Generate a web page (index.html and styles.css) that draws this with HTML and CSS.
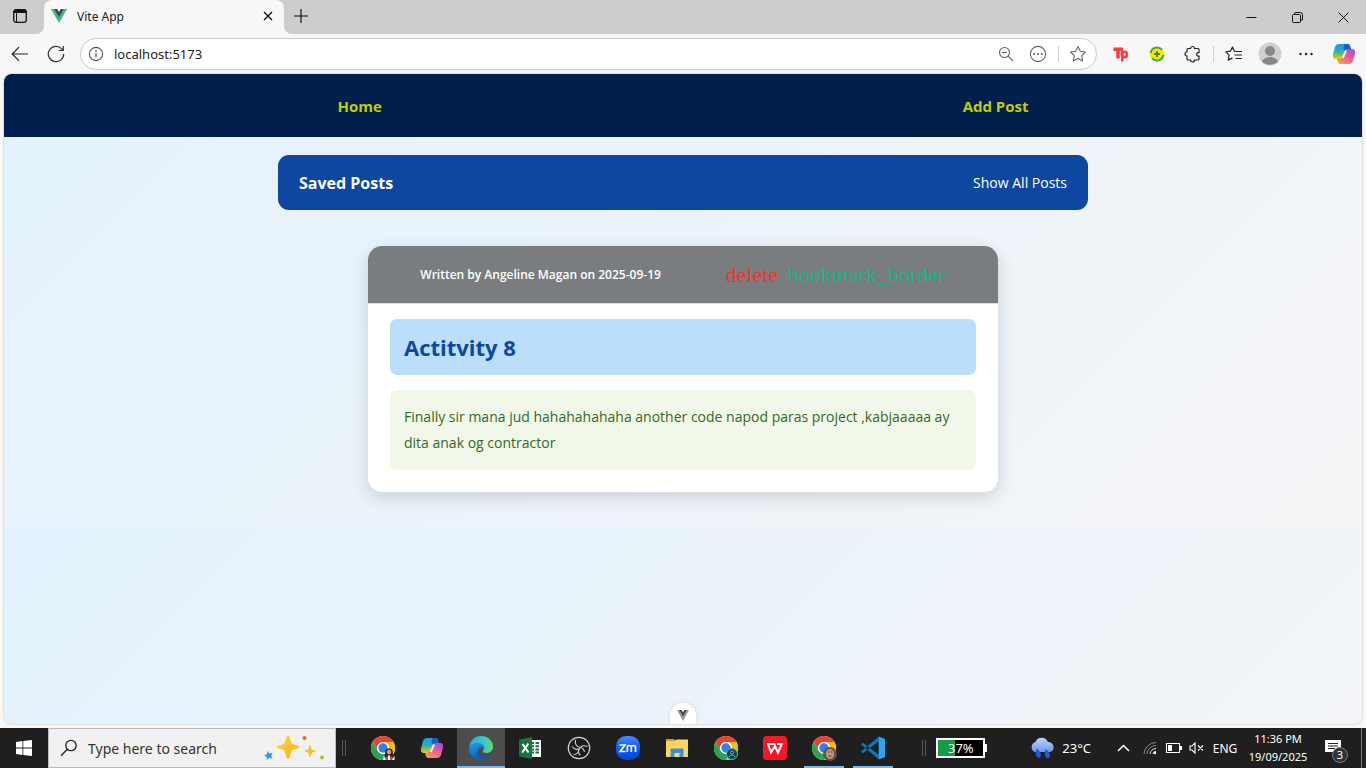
FILE: index.html
```html
<!DOCTYPE html>
<html lang="en">
<head>
<meta charset="utf-8">
<meta name="viewport" content="width=device-width, initial-scale=1">
<title>Vite App</title>
<link rel="stylesheet" href="styles.css">
</head>
<body>
<svg class="defs" aria-hidden="true">
  <defs>
    <linearGradient id="cpTop" x1="0" y1="0" x2="0" y2="1"><stop offset="0" stop-color="#1a9fe8"/><stop offset=".45" stop-color="#27a9c9"/><stop offset=".75" stop-color="#84c742"/><stop offset="1" stop-color="#f5c715"/></linearGradient>
    <linearGradient id="cpBot" x1="0.8" y1="0" x2="0.2" y2="1"><stop offset="0" stop-color="#a44ce8"/><stop offset=".5" stop-color="#ee5c94"/><stop offset="1" stop-color="#ff9a5a"/></linearGradient>
    <linearGradient id="edgeA" x1="0" y1="0" x2="1" y2="0"><stop offset="0" stop-color="#2ba8e0"/><stop offset=".55" stop-color="#35c4cf"/><stop offset="1" stop-color="#5fdc63"/></linearGradient>
    <linearGradient id="edgeB" x1="0" y1="0" x2="0.4" y2="1"><stop offset="0" stop-color="#1b9be6"/><stop offset="1" stop-color="#0b62bd"/></linearGradient>
    <linearGradient id="cloud" x1="0" y1="0" x2="0" y2="1"><stop offset="0" stop-color="#bcd6ff"/><stop offset="1" stop-color="#6d97e6"/></linearGradient>
    <linearGradient id="gold" x1="0" y1="0" x2="1" y2="1"><stop offset="0" stop-color="#ffdc3c"/><stop offset="1" stop-color="#f7ae1b"/></linearGradient>
    <linearGradient id="zoomBlue" x1="0" y1="0" x2="0" y2="1"><stop offset="0" stop-color="#4b8bff"/><stop offset=".5" stop-color="#0b5cff"/><stop offset="1" stop-color="#0345d0"/></linearGradient>
    <symbol id="copilot" viewBox="0 0 24 24">
      <path d="M7 2h8.500c1.600 0 2.200.8 2.600 2.200L19 7h-2.300c-2 0-2.900.9-3.500 2.700L11.600 14c-.7 2-1.700 3-3.800 3H4.200C1.300 17 .4 15.200 1 12.500L3 5C3.600 3 5 2 7 2z" fill="url(#cpTop)"/>
      <path d="M12.500 2h3c1.600 0 2.200.8 2.600 2.200L19 7h-2.300c-2 0-2.900.9-3.500 2.400L11.500 6z" fill="#1460c8"/>
      <path d="M17 22H8.500c-1.600 0-2.200-.8-2.600-2.200L5 17h2.500c2 0 2.900-.9 3.500-2.700l1.500-4.300c.7-2 1.700-3 3.800-3h3.500c2.900 0 3.800 1.800 3.200 4.500L21 19c-.6 2-2 3-4 3z" fill="url(#cpBot)"/>
      <path d="M14 8.500l-3.200 7.500" stroke="#fff" stroke-opacity=".85" stroke-width="2"/>
    </symbol>
    <symbol id="chrome" viewBox="0 0 24 24">
      <circle cx="12" cy="12" r="12" fill="#fff"/>
      <path d="M1.600 6A12 12 0 0 1 22.400 6H12a6 6 0 0 0-5.200 9z" fill="#ea4335"/>
      <path d="M22.400 6A12 12 0 0 1 12 24l5.200-9A6 6 0 0 0 12 6z" fill="#fbbc05"/>
      <path d="M1.600 6A12 12 0 0 0 12 24l5.200-9a6 6 0 0 1-10.400 0z" fill="#2ba24c"/>
      <circle cx="12" cy="12" r="5.800" fill="#fff"/><circle cx="12" cy="12" r="4.700" fill="#3b7ded"/>
    </symbol>
  </defs>
</svg>

<header class="tabstrip">
  <div class="tabstrip-start"><button class="tabs-button" aria-label="Tab actions">
    <svg width="16" height="16" viewBox="0 0 16 16"><rect x="1.700" y="1.700" width="12.600" height="12.600" rx="2.500" fill="none" stroke="#111" stroke-width="1.300"/><path d="M1.500 5V3.500a2 2 0 0 1 2-2h9a2 2 0 0 1 2 2V5z" fill="#111"/><path d="M4.500 5v9.500" stroke="#111"/></svg>
  </button></div>
  <div class="tab-back"><div class="tab">
    <svg width="16" height="14" viewBox="0 0 16 14"><path d="M0 0h3.500L8 7.600 12.500 0H16L8 14z" fill="#41b883"/><path d="M3.200 0H6.200L8 3l1.800-3h3L8 8.300z" fill="#35495e"/></svg>
    <span class="tab-title">Vite App</span>
    <button class="tab-close" aria-label="Close tab"><svg width="10" height="10" viewBox="0 0 10 10"><path d="M1 1l8 8M9 1L1 9" stroke="#111" stroke-width="1.400"/></svg></button>
  </div></div>
  <div class="tabstrip-rest">
    <button class="new-tab" aria-label="New tab"><svg width="14" height="14" viewBox="0 0 14 14"><path d="M7 0v14M0 7h14" stroke="#111" stroke-width="1.200"/></svg></button>
    <div class="window-controls">
      <button aria-label="Minimize"><svg width="11" height="11" viewBox="0 0 11 11"><path d="M.5 5.500h10" stroke="#111"/></svg></button>
      <button aria-label="Restore"><svg width="11" height="11" viewBox="0 0 11 11"><path d="M2.500 2.500V2A1.500 1.500 0 0 1 4 .5h4.500a2 2 0 0 1 2 2V7A1.500 1.500 0 0 1 9 8.500h-.5" fill="none" stroke="#111"/><rect x=".5" y="2.500" width="8" height="8" rx="1" fill="none" stroke="#111"/></svg></button>
      <button aria-label="Close"><svg width="11" height="11" viewBox="0 0 11 11"><path d="M.5.500l10 10M10.500.500l-10 10" stroke="#111"/></svg></button>
    </div>
  </div>
</header>

<div class="toolbar">
  <div class="tools">
    <button aria-label="Back"><svg width="18" height="16" viewBox="0 0 18 16" fill="none" stroke="#222" stroke-width="1.200"><path d="M17 8H1.500M8 1.200L1.200 8 8 14.800"/></svg></button>
    <button aria-label="Refresh"><svg width="18" height="18" viewBox="0 0 18 18" fill="none" stroke="#333" stroke-width="1.200"><path d="M16.700 9A7.700 7.700 0 1 1 14.600 3.700L16 5.300M16.300 1v4.500h-4.600"/></svg></button>
  </div>
  <div class="address">
    <button class="address-info" aria-label="Site information"><svg width="16" height="16" viewBox="0 0 16 16"><circle cx="8" cy="8" r="6.600" fill="none" stroke="#555" stroke-width="1.100"/><path d="M8 7v4" stroke="#555" stroke-width="1.200"/><circle cx="8" cy="5" r=".9" fill="#555"/></svg></button>
    <input class="address-input" type="text" value="localhost:5173" aria-label="Address">
    <button aria-label="Zoom out"><svg width="16" height="16" viewBox="0 0 16 16" fill="none" stroke="#666" stroke-width="1.100"><circle cx="6.500" cy="6.500" r="5"/><path d="M10.200 10.200l4.800 4.800M4 6.500h5"/></svg></button>
    <button aria-label="More page actions"><svg width="18" height="18" viewBox="0 0 18 18"><circle cx="9" cy="9" r="7.600" fill="none" stroke="#666" stroke-width="1.100"/><g fill="#555"><circle cx="5.200" cy="9" r="1"/><circle cx="9" cy="9" r="1"/><circle cx="12.800" cy="9" r="1"/></g></svg></button>
    <span class="divider"></span>
    <button aria-label="Add to favorites"><svg width="18" height="18" viewBox="0 0 18 18"><path d="M9 1.500l2.300 4.800 5.200.7-3.800 3.700.9 5.300L9 13.500 4.400 16l.9-5.300L1.500 7l5.200-.7z" fill="none" stroke="#666" stroke-width="1.100" stroke-linejoin="round"/></svg></button>
  </div>
  <div class="tools">
    <button aria-label="Extension"><svg width="16" height="16" viewBox="0 0 16 16" fill="none" stroke="#fb3b40"><path d="M.5 3.200H10M5 3v9.500" stroke-width="3.400"/><path d="M9.300 5v10.500" stroke-width="2.600"/><circle cx="11.300" cy="8.500" r="2.700" stroke-width="2.500"/></svg></button>
    <button aria-label="Extension"><svg width="16" height="16" viewBox="0 0 16 16"><circle cx="8" cy="8" r="7.200" fill="#ffe500"/><path d="M1.600 7A6.500 6.500 0 0 1 13 3.800M14.400 9A6.500 6.500 0 0 1 3 12.200" fill="none" stroke="#4da844" stroke-width="2"/><path d="M8 5v6M5 8h6" stroke="#38933b" stroke-width="2"/></svg></button>
    <button aria-label="Extensions"><svg width="18" height="18" viewBox="0 0 18 18"><path d="M6.500 3.500a2 2 0 0 1 4 0H14a1 1 0 0 1 1 1v3.200h-.7a1.700 1.700 0 0 0 0 3.400h.7V14a1 1 0 0 1-1 1h-3.500a2 2 0 0 1-4 0H4a1 1 0 0 1-1-1v-3a2 2 0 0 1 0-4V4.500a1 1 0 0 1 1-1z" fill="none" stroke="#222" stroke-width="1.200"/></svg></button>
    <span class="divider"></span>
    <button aria-label="Favorites"><svg width="18" height="18" viewBox="0 0 18 18" fill="none" stroke="#222" stroke-width="1.200" stroke-linejoin="round"><path d="M11 6.400l-1.600-.2L7.500 2 5.400 6.200l-4.600.7 3.300 3.300-.8 4.900 4.200-2.200M11 6.500h6M9.500 10H17M10.500 13.500H17"/></svg></button>
    <button aria-label="Profile"><svg width="24" height="24" viewBox="0 0 24 24"><circle cx="12" cy="12" r="11.500" fill="#d2d0ce"/><circle cx="12" cy="9" r="5" fill="#8a8886"/><path d="M4 19.500c2-6 14-6 16 0a11.500 11.500 0 0 1-16 0z" fill="#8a8886"/></svg></button>
    <button aria-label="Settings and more"><svg width="14" height="4" viewBox="0 0 14 4" fill="#222"><circle cx="1.500" cy="2" r="1.200"/><circle cx="7" cy="2" r="1.200"/><circle cx="12.500" cy="2" r="1.200"/></svg></button>
    <button class="copilot-button" aria-label="Copilot"><svg width="24" height="24"><use href="#copilot"/></svg></button>
  </div>
</div>

<div class="viewport">
  <nav class="nav"><a href="#home">Home</a><a href="#add">Add Post</a></nav>
  <main class="main">
    <section class="saved"><h2>Saved Posts</h2><button>Show All Posts</button></section>
    <article class="post">
      <header class="post-head">
        <p>Written by Angeline Magan on 2025-09-19</p>
        <div class="post-actions"><button class="delete">delete</button><button class="bookmark">bookmark_border</button></div>
      </header>
      <div class="post-body">
        <h3>Actitvity 8</h3>
        <p>Finally sir mana jud hahahahahaha another code napod paras project ,kabjaaaaa ay dita anak og contractor</p>
      </div>
    </article>
  </main>
  <button class="devtools" aria-label="Toggle Vue DevTools"><svg width="12" height="11" viewBox="0 0 12 11"><path d="M0 0h2.700L6 5.500 9.300 0H12L6 11z" fill="#999"/><path d="M2.400 0h2.200L6 2.400 7.400 0h2.200L6 6.500z" fill="#444"/></svg></button>
</div>

<footer class="taskbar">
  <button class="start" aria-label="Start"><svg width="16" height="16" viewBox="0 0 16 16" fill="#fff"><path d="M0 2l6.500-.9v6.400H0zM7.300 1L16 0v7.500H7.300zM0 8.400h6.500v6.500L0 14zM7.300 8.400H16V16l-8.700-1.100z"/></svg></button>
  <label class="search">
    <svg width="18" height="18" viewBox="0 0 18 18" fill="none" stroke="#222" stroke-width="1.300"><circle cx="11" cy="6.500" r="5.200"/><path d="M7.300 10.300L1 16.800"/></svg>
    <input type="text" placeholder="Type here to search" aria-label="Type here to search">
    <svg width="60" height="28" viewBox="0 0 60 28"><path d="M24 1.500c2 0 2.500 7 4 8.300S35.500 11.300 35.500 13s-6 1.900-7.500 3.200S26 25 24 25s-2.500-7.500-4-8.800S12.500 14.700 12.500 13s6-1.900 7.500-3.200S22 1.500 24 1.500z" fill="url(#gold)"/><path d="M46 11c1 0 1 3.500 2 4.500s4 .7 4 1.600-3 .8-4 1.700-1 4.200-2 4.200-1-3.300-2-4.200-3.500-.8-3.500-1.700 2.500-.6 3.500-1.600 1-4.500 2-4.500z" fill="#fdbd2b"/><path d="M3.500 17l2 2.500 3-.5-1.200 2.700 1 3-3-.9L2.500 26l.2-3L0 21.200l3-.7z" fill="#12a7ef"/><circle cx="40.500" cy="4" r="2" fill="#f2632b"/><circle cx="58" cy="23.500" r="2" fill="#8fca42"/></svg>
  </label>
  <span class="grip"></span>
  <div class="apps">
    <button aria-label="Chrome profile 1"><svg width="26" height="26" viewBox="0 0 26 26"><use href="#chrome" x="1" y="1" width="24" height="24"/><path d="M15 24c-.5-10 1-10.500 4-10.500s4.500.5 4 10.500z" fill="#3b2525"/><circle cx="19" cy="17" r="2.200" fill="#d8a083"/><path d="M14 25c1-5 9-5 10 0z" fill="#d43f62"/><path d="M13.500 20.500l2.500 4.500h-2.500zM24.500 20.500L22 25h2.500zM18 20.500h2V25h-2z" fill="#fff"/></svg></button>
    <button aria-label="Copilot"><svg width="24" height="24"><use href="#copilot"/></svg></button>
    <button class="active" aria-label="Microsoft Edge"><svg width="24" height="24" viewBox="0 0 24 24"><path d="M.3 11C1 4.500 6 0 12 0c7 0 12 5 12 10.500 0 4-3 6.500-6.500 6.500-2.500 0-4-1-3.500-2 2-3 0-7.500-5-7.500-4 0-7.200 1.500-8.700 3.500z" fill="url(#edgeA)"/><path d="M.2 11.500C1.500 8.500 5 7 9 7c4.500 0 7 3 6.300 6-1-2-5-2-6 1-1.300 4 3 9 8.200 7.500-1.500 1.500-3.300 2.500-6 2.500C5 24-.6 18.500.2 11.500z" fill="url(#edgeB)"/><path d="M9.500 13.500c-1 4 3 8 8 7.500 2-.3 4-1.200 5-2.500-1.500 3.500-5.500 5.500-10 5.500C7 22 6.500 16.500 9.500 13.500z" fill="#1459ad"/></svg></button>
    <button aria-label="Excel"><svg width="24" height="24" viewBox="0 0 24 24"><path d="M12 4h11v17H12z" fill="#fff"/><path d="M13 6h3v2h-3zM17.500 6H21v2h-3.500zM13 9.200h3v2h-3zM17.500 9.200H21v2h-3.500zM13 12.400h3v2h-3zM17.500 12.400H21v2h-3.500zM13 15.600h3v2h-3zM17.500 15.600H21v2h-3.500z" fill="#1e7145"/><path d="M1 3.500L14 1v22L1 20.500z" fill="#1e7145"/><path d="M4.500 8l6 8.500M10.300 7.500L4.300 16.500" stroke="#fff" stroke-width="2"/></svg></button>
    <button aria-label="OBS Studio"><svg width="24" height="24" viewBox="0 0 24 24" fill="none" stroke="#d4d4d4"><circle cx="12" cy="12" r="10.700" fill="#1c1b1e" stroke-width="1.200"/><path d="M8.500 3.800c-.8 4 1 7 3.800 7.500M20.500 10.500c-3.800-1.500-7-.3-8.200 2.500M6.500 18.800c3.500-.5 5.700-3 5.200-6M12.300 11.300c2.500.2 4.700 2 5.200 4.500M12.300 13c-1.500 2.200-.8 4.500 1 6.300M11.700 12.800C9.500 14 6.800 13 5 10.500" stroke-width="1.100"/></svg></button>
    <button aria-label="Zoom"><svg width="24" height="24" viewBox="0 0 24 24"><rect width="24" height="24" rx="10" fill="url(#zoomBlue)"/><path d="M3.500 9H9l-5 6.500h5.500M11.300 16v-4.500c0-2.700 4-2.700 4 0V16M15.300 11.500c0-2.700 4.200-2.700 4.200 0V16" fill="none" stroke="#fff" stroke-width="1.700"/></svg></button>
    <button aria-label="File Explorer"><svg width="24" height="24" viewBox="0 0 24 24"><path d="M1 3h8l2 2H1z" fill="#d99a13"/><path d="M1 5h8.500l2-1.500H23V21H1z" fill="#ffd55f"/><path d="M5.500 14c0-1 .7-1.500 1.500-1.500h10c1 0 1.500.5 1.500 1.500v7h-4v-4h-5v4h-4z" fill="#3c92d6"/></svg></button>
    <button aria-label="Chrome profile 2"><svg width="26" height="26" viewBox="0 0 26 26"><use href="#chrome" x="1" y="1" width="24" height="24"/><circle cx="19" cy="19" r="5.500" fill="#153e48" stroke="#50b5c4"/><circle cx="19" cy="17.500" r="1.600" fill="none" stroke="#50b5c4"/><path d="M16 22c1-2.700 5-2.700 6 0" fill="none" stroke="#50b5c4"/></svg></button>
    <button aria-label="WPS Office"><svg width="24" height="24" viewBox="0 0 24 24"><rect width="24" height="24" rx="3.500" fill="#ff1427"/><path d="M4 8h8.500M5 8l3 8.500L12 10l3 6.500L18.800 8H14" fill="none" stroke="#fff" stroke-width="2"/></svg></button>
    <button class="running" aria-label="Chrome profile 3"><svg width="26" height="26" viewBox="0 0 26 26"><use href="#chrome" x="1" y="1" width="24" height="24"/><circle cx="19" cy="19" r="7" fill="#655247"/><ellipse cx="19" cy="19" rx="4.200" ry="5" fill="#bd9581"/><path d="M17 17h1.500M20 17h1.500M17.500 21h3" stroke="#5c3c33"/></svg></button>
    <button class="running" aria-label="Visual Studio Code"><svg width="24" height="24" viewBox="0 0 24 24"><path d="M17.500.500L24 3v18l-6.500 2.500z" fill="#2ba7f1"/><path d="M0 8.500l2-1.800L18 19v4.500zM0 15.500l2 1.800L18 5V.5z" fill="#087abf"/><path d="M17.500 6.500v11L10 12z" fill="#202020"/></svg></button>
  </div>
  <span class="grip grip-end"></span>
  <div class="battery"><span class="battery-level" style="width:37%"></span><span class="battery-text">37%</span></div>
  <div class="weather"><svg width="26" height="22" viewBox="0 0 26 22"><path d="M6 15a5.300 5.300 0 0 1 .5-10C8-.5 17-1 19 5c7 0 7.500 10 1 10z" fill="url(#cloud)"/><path d="M7.500 11.500c5 3 5.500 8.500 3 9.200s-5-2.500-3-9.200zM16.500 12c5 3 5.500 8.500 3 9.200s-5-2.500-3-9.200z" fill="#2456e8"/></svg><span>23°C</span></div>
  <div class="tray">
    <button aria-label="Show hidden icons"><svg width="13" height="8" viewBox="0 0 13 8"><path d="M1 7l5.500-5.500L12 7" fill="none" stroke="#fff" stroke-width="1.500"/></svg></button>
    <button aria-label="Network"><svg width="14" height="14" viewBox="0 0 14 14" fill="none" stroke="#888"><path d="M1 13A12 12 0 0 1 13 1.500M4 13a9 9 0 0 1 9-8.500"/><path d="M7 13a6 6 0 0 1 6-5.500M10 13a3 3 0 0 1 3-2.700" stroke="#ddd"/><circle cx="12" cy="12" r="1.200" fill="#fff" stroke="none"/></svg></button>
    <button aria-label="Battery"><svg width="16" height="10" viewBox="0 0 16 10"><rect x=".5" y=".5" width="13" height="9" fill="none" stroke="#fff"/><path d="M2 2h4v6H2zM14 3h2v4h-2z" fill="#fff"/></svg></button>
    <button aria-label="Volume muted"><svg width="15" height="12" viewBox="0 0 15 12" fill="none" stroke="#fff" stroke-width="1.100"><path d="M1 4h2l3-3v10L3 8H1zM9 3.500l5 5M14 3.500l-5 5"/></svg></button>
  </div>
  <button class="lang">ENG</button>
  <button class="clock"><span>11:36 PM</span><span>19/09/2025</span></button>
  <button class="notices" aria-label="3 notifications"><svg width="16" height="16" viewBox="0 0 16 16"><path d="M0 0h16v12h-5l-3 4v-4H0z" fill="#fff"/><path d="M3 3.500h10M3 6h10M3 8.500h7" stroke="#222"/></svg><span class="count">3</span></button>
</footer>
</body>
</html>
```
FILE: styles.css
```css
* { box-sizing: border-box; }
body {
  margin: 0;
  height: 100vh;
  display: flex;
  flex-direction: column;
  background: #f7f7f7;
  color: #222;
  font: 12px "Noto Sans", sans-serif;
}
button { border: 0; padding: 0; background: none; color: inherit; font: inherit; display: flex; align-items: center; justify-content: center; }
input { border: 0; padding: 0; background: none; outline: 0; font: inherit; color: inherit; min-width: 0; }
svg { display: block; flex: none; }
h2, h3, p { margin: 0; }
.defs { position: absolute; width: 0; height: 0; }

/* Browser frame */
.tabstrip { display: flex; height: 34px; flex: none; }
.tabstrip-start, .tabstrip-rest { background: #cdcdcd; display: flex; }
.tabstrip-start { width: 44px; border-bottom-right-radius: 8px; }
.tabs-button { width: 40px; height: 32px; }
.tab-back { background: linear-gradient(#cdcdcd 50%, #f7f7f7 50%); }
.tab { width: 240px; height: 34px; display: flex; align-items: center; gap: 10px; padding: 0 8px 2px 7px; background: #f7f7f7; border-radius: 8px 8px 0 0; }
.tab-title { flex: 1; }
.tab-close { width: 16px; height: 16px; }
.tabstrip-rest { flex: 1; border-bottom-left-radius: 8px; justify-content: space-between; }
.new-tab { width: 34px; height: 32px; }
.window-controls { display: flex; }
.window-controls button { width: 46px; }

.toolbar { display: flex; align-items: center; gap: 6px; height: 40px; flex: none; padding: 0 4px 0 2px; }
.tools { display: flex; align-items: center; }
.tools button { width: 36px; height: 32px; }
.tools .copilot-button { width: 38px; padding-left: 2px; }
.divider { width: 1px; height: 16px; margin: 0 2px; background: #cfcfcf; }
.address { flex: 1; display: flex; align-items: center; height: 32px; border: 1px solid #cbcbcb; border-radius: 16px; background: #fff; padding-right: 2px; }
.address button { width: 32px; height: 28px; }
.address .address-info { width: 30px; margin-right: 3px; }
.address-input { flex: 1; font-size: 13px; }
.address .divider { margin: 0 3px 0 4px; }

/* Page */
.viewport {
  position: relative;
  flex: 1;
  margin: 0 4px 4px;
  border-radius: 8px;
  overflow: hidden;
  background: linear-gradient(135deg, #e3f2fd, #f5f5f7) 0 0 / 100% 454px;
  box-shadow: 0 0 2px #aaa;
  font-family: "Open Sans", sans-serif;
}
.nav { display: flex; justify-content: space-around; align-items: center; height: 63px; padding: 0 43px; background: #001f4d; }
.nav a { color: #c4cc00; font-size: 15px; font-weight: 700; text-decoration: none; }
.main { display: flex; flex-direction: column; align-items: center; gap: 36px; padding: 18px 16px; }
.saved { width: 100%; max-width: 810px; height: 55px; padding: 0 21px; display: flex; align-items: center; justify-content: space-between; background: #0d47a1; color: #fff; border-radius: 11px; }
.saved h2 { font-size: 16px; font-weight: 700; }
.saved button { font-size: 14px; font-weight: 500; }
.post { width: 100%; max-width: 630px; background: #fff; border-radius: 14px; box-shadow: 0 5px 18px rgba(0, 0, 0, .15); overflow: hidden; }
.post-head { display: flex; justify-content: space-around; align-items: center; height: 58px; padding: 0 20px; background: #797d7f; border-bottom: 1px solid #cfdff0; color: #fff; font-size: 12px; font-weight: 600; }
.post-actions { display: flex; gap: 10px; font: 22px/24px "Liberation Serif", serif; }
.delete { color: #e53935; }
.bookmark { color: #1fb184; }
.post-body { display: flex; flex-direction: column; gap: 15px; padding: 15px 22px 22px; }
.post-body h3 { padding: 12px 14px; background: #bbdefb; border-radius: 7px; color: #0d47a1; font-size: 22px; line-height: 32px; font-weight: 700; }
.post-body p { padding: 14px; background: #f1f8e9; border-radius: 7px; color: #33691e; font-size: 14px; line-height: 26px; font-weight: 500; }
.devtools { position: absolute; left: 50%; bottom: 0; width: 26px; height: 21px; margin-left: -13px; padding-top: 4px; border-radius: 13px 13px 0 0; background: #fff; box-shadow: 0 0 4px rgba(0, 0, 0, .1); }

/* Taskbar */
.taskbar { display: flex; align-items: center; height: 40px; flex: none; background: #1f1f1f; color: #fff; }
.taskbar > button, .apps, .apps button { height: 40px; }
.start { width: 48px; }
.search { display: flex; align-items: center; gap: 10px; width: 288px; height: 40px; padding: 0 11px; background: #f1f1f1; border: 1px solid #bcbcbc; color: #333; }
.search input { flex: 1; font-size: 14px; }
.search input::placeholder { color: #333; opacity: 1; }
.grip { width: 4px; height: 16px; margin: 0 13px 0 6px; border: solid #555; border-width: 0 1px; }
.apps { display: flex; gap: 1px; margin-right: auto; }
.apps button { width: 48px; border-bottom: 2px solid transparent; border-top: 1px solid transparent; }
.apps .active { background: #4d4d4d; border-bottom-color: #76b9ed; }
.apps .running { background: linear-gradient(#76b9ed, #76b9ed) center bottom / 40px 2px no-repeat border-box; }
.grip-end { margin: 0 10px 0 0; }
.battery { position: relative; width: 49px; height: 20px; margin-right: 44px; border: 2px solid #fff; background: #000; display: flex; }
.battery::after { content: ""; position: absolute; right: -4px; top: 4px; width: 2px; height: 8px; background: #fff; }
.battery-level { background: #149b48; }
.battery-text { position: absolute; inset: 0; text-align: center; font-size: 13px; line-height: 16px; }
.weather { display: flex; align-items: center; gap: 7px; font-size: 13px; margin-right: 20px; }
.tray { display: flex; align-items: center; }
.tray button { width: 24px; height: 40px; }
.tray button:nth-child(n+3) { width: 22px; }
.tray button:nth-child(2) { width: 28px; padding-left: 2px; }
.lang { width: 36px; }
.clock { flex-direction: column; width: 70px; line-height: 18px; font-size: 11px; }
.notices { position: relative; width: 49px; border-right: 1px solid #777; margin-right: 4px; padding-right: 8px; }
.count { position: absolute; right: 13px; bottom: 5px; width: 16px; height: 16px; border: 1px solid #777; border-radius: 50%; background: #333; font-size: 11px; line-height: 14px; }
```
